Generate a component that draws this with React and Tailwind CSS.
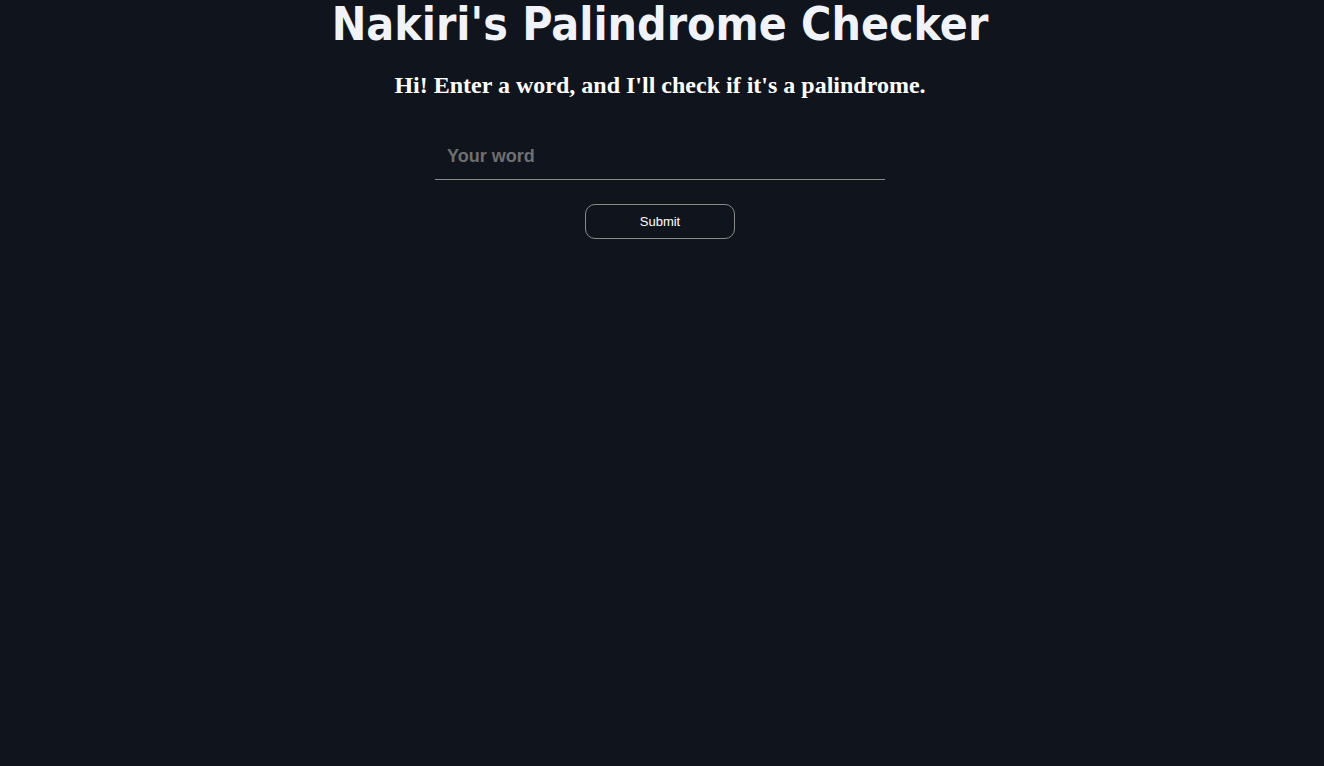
import React from 'react'

function App() {
  return (
    <div className="min-h-screen w-full bg-[#10141d] text-[#f0f3fa] flex flex-col items-center pr-1">
      {/* Title */}
      <h1 className="mt-[1px] text-[46px] leading-[46px] font-bold font-['DejaVu_Sans_Condensed','DejaVu_Sans',sans-serif]">
        Nakiri's Palindrome Checker
      </h1>

      <h2 className="mt-[23px] text-[24px] leading-[30px] font-bold font-['Liberation_Serif',serif] text-white">
        Hi! Enter a word, and I'll check if it's a palindrome.
      </h2>

      <form className="mt-[32px] flex flex-col items-center" onSubmit={(e) => e.preventDefault()}>
        <input
          type="text"
          placeholder="Your word"
          className="w-[450px] h-[48px] bg-transparent border-b border-[#8a8a8a] px-3 pt-[2px] text-[18px] font-bold text-white placeholder:text-[#6f6f6f] outline-none font-['Liberation_Sans',sans-serif]"
        />
        <button
          type="submit"
          className="mt-[24px] w-[150px] h-[35px] rounded-[10px] border border-[#8a8a8a] text-[13px] text-white font-['Liberation_Sans',sans-serif]"
        >
          Submit
        </button>
      </form>
    </div>
  )
}

export default App
